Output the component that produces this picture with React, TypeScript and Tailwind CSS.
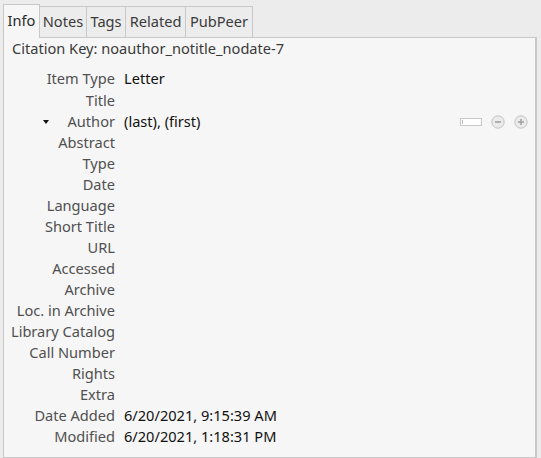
import React from "react";

const rows: [string, string][] = [
  ["Item Type", "Letter"],
  ["Title", ""],
  ["Author", "(last), (first)"],
  ["Abstract", ""],
  ["Type", ""],
  ["Date", ""],
  ["Language", ""],
  ["Short Title", ""],
  ["URL", ""],
  ["Accessed", ""],
  ["Archive", ""],
  ["Loc. in Archive", ""],
  ["Library Catalog", ""],
  ["Call Number", ""],
  ["Rights", ""],
  ["Extra", ""],
  ["Date Added", "6/20/2021, 9:15:39 AM"],
  ["Modified", "6/20/2021, 1:18:31 PM"],
];

function CircleBtn({ plus }: { plus?: boolean }) {
  return (
    <svg width="14" height="14" viewBox="0 0 14 14">
      <circle cx="7" cy="7" r="6.2" fill="#ebebeb" stroke="#c2c2c2" strokeWidth="1" />
      <line x1="4" y1="7" x2="10" y2="7" stroke="#a6a6a6" strokeWidth="1.7" />
      {plus && <line x1="7" y1="4" x2="7" y2="10" stroke="#a6a6a6" strokeWidth="1.7" />}
    </svg>
  );
}

export default function App() {
  const tabs = [
    { name: "Notes", w: "w-[47px]" },
    { name: "Tags", w: "w-[39px]" },
    { name: "Related", w: "w-[60px]" },
    { name: "PubPeer", w: "w-[67px]" },
  ];
  return (
    <div
      className="w-[541px] h-[458px] bg-[#ececec] flex flex-col overflow-hidden text-[14.6px]"
      style={{ fontFamily: '"Noto Sans", "Open Sans", sans-serif' }}
    >
      <div className="flex items-end pl-[3px] pt-[4px] relative z-10">
        <div className="w-[37px] h-[34px] -mb-px border border-b-0 border-[#c8c8c8] bg-[#f6f6f6] flex items-center justify-center text-[#2a2a2a] pb-[2px]">
          Info
        </div>
        {tabs.map((t) => (
          <div
            key={t.name}
            className={`${t.w} h-[31px] border border-l-0 border-b-0 border-[#c8c8c8] bg-[#ececec] flex items-center justify-center text-[#3a3a3a]`}
          >
            {t.name}
          </div>
        ))}
      </div>
      <div className="ml-[3px] w-[534px] flex-1 border border-[#c8c8c8] border-r-2 bg-[#f6f6f6] flex flex-col">
        <div className="pl-[8px] h-[22px] flex items-center text-[#3a3a3a]">
          Citation Key: noauthor_notitle_nodate-7
        </div>
        <div className="mt-[8px] flex flex-col">
          {rows.map(([label, value], i) => (
            <div
              key={label}
              className={`flex items-center ${i === 0 ? "h-[22px]" : "h-[21px]"}`}
            >
              <div className="w-[111px] relative text-right text-[#505050] whitespace-nowrap">
                {label === "Author" && (
                  <span className="absolute left-[39px] top-1/2 -translate-y-1/2 w-0 h-0 border-l-[3.5px] border-r-[3.5px] border-t-[4px] border-l-transparent border-r-transparent border-t-[#111]" />
                )}
                {label}
              </div>
              <div className="ml-[9px] flex-1 flex items-center text-[#111] whitespace-nowrap pr-[7px]">
                <span>{value}</span>
                {label === "Author" && (
                  <div className="ml-auto flex items-center">
                    <div className="w-[22px] h-[8px] border border-[#c8c8c8] bg-white flex items-center pl-[1px]">
                      <div className="w-px h-[4px] bg-[#bbb]" />
                    </div>
                    <div className="ml-[9px] flex">
                      <CircleBtn />
                    </div>
                    <div className="ml-[9px] flex">
                      <CircleBtn plus />
                    </div>
                  </div>
                )}
              </div>
            </div>
          ))}
        </div>
      </div>
    </div>
  );
}
